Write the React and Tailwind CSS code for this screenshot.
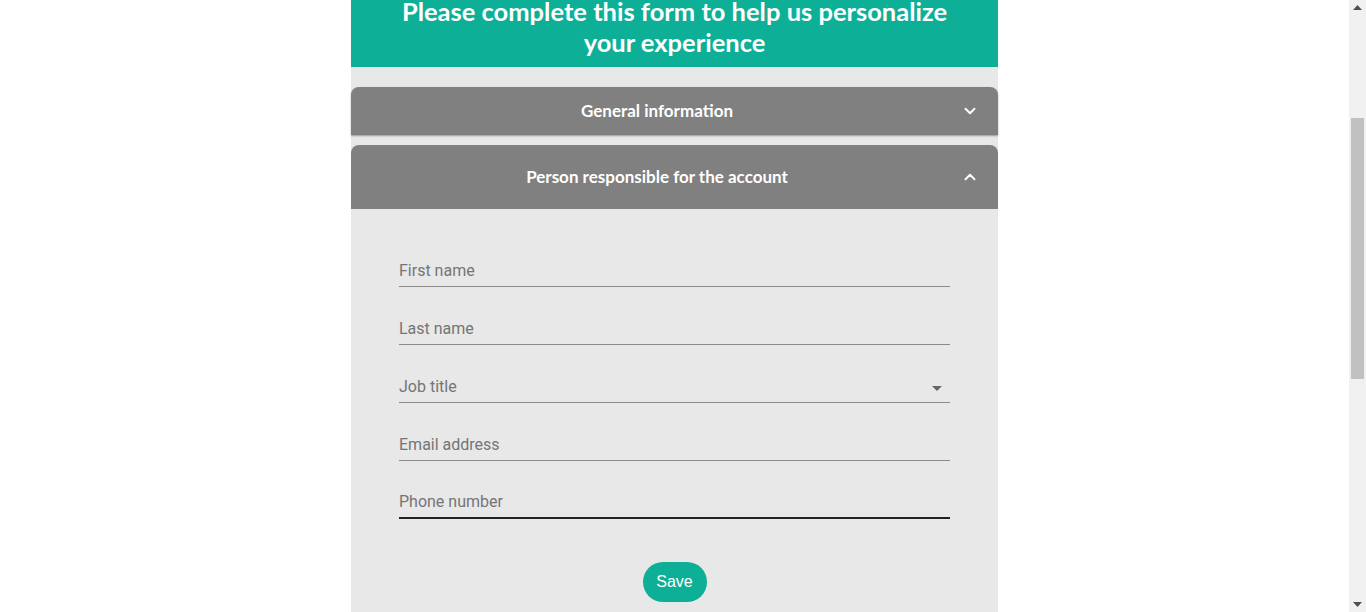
import { ChevronDown, ChevronUp } from 'lucide-react'

const fields = ['First name', 'Last name', 'Job title', 'Email address', 'Phone number']

function Field({ label }) {
  const select = label === 'Job title'
  const focused = label === 'Phone number'
  return (
    <div
      className={`h-[33px] flex items-end justify-between pb-[6px] ${
        focused ? 'border-b-2 border-[#222]' : 'border-b border-[#8a8a8a]'
      }`}
    >
      <span className="text-[16px] leading-[19px] text-[#757575] font-['Roboto',sans-serif]">{label}</span>
      {select && (
        <svg className="w-[24px] h-[24px] text-[#666] mb-[-4px] mr-[1px]" viewBox="0 0 24 24" fill="currentColor">
          <path d="M7 10l5 5 5-5z" />
        </svg>
      )}
    </div>
  )
}

function App() {
  return (
    <div className="h-[612px] overflow-hidden flex bg-white font-['Lato',sans-serif]">
      <div className="flex-1 flex justify-center">
        <div className="w-[647px] bg-[#e8e8e8]">
          {/* Header */}
          <div className="bg-[#0eaf97] mt-[-4px] pb-[9px] px-4 text-center">
            <h1 className="text-white text-[25.5px] leading-[31px] font-bold">
              Please complete this form to help us personalize
              <br />
              your experience
            </h1>
          </div>

          {/* General information */}
          <div className="mt-[20px] h-[48px] bg-[#808080] rounded-t-[8px] shadow-[0_1px_2px_rgba(0,0,0,0.35)] flex items-center pl-4 pr-[5px]">
            <span className="flex-1 text-center text-white text-[17px] font-bold">General information</span>
            <div className="w-[46px] flex justify-center">
              <ChevronDown className="w-[18px] h-[18px] text-white" strokeWidth={2.5} />
            </div>
          </div>

          {/* Person responsible */}
          <div className="mt-[10px] h-[64px] bg-[#808080] rounded-t-[8px] flex items-center pl-4 pr-[5px]">
            <span className="flex-1 text-center text-white text-[17px] font-bold">Person responsible for the account</span>
            <div className="w-[46px] flex justify-center">
              <ChevronUp className="w-[18px] h-[18px] text-white" strokeWidth={2.5} />
            </div>
          </div>

          <div className="px-[48px] pt-[45px] flex flex-col gap-[25px]">
            {fields.map((f) => (
              <Field key={f} label={f} />
            ))}
          </div>

          <div className="flex justify-center mt-[43px]">
            <button className="w-[64px] h-[40px] rounded-full bg-[#0eaf97] text-white text-[16px] font-['Liberation_Sans',Arial,sans-serif]">
              Save
            </button>
          </div>
        </div>
      </div>

      {/* Scrollbar */}
      <div className="w-[17px] bg-[#f1f1f1] flex flex-col items-center relative">
        <svg className="w-[9px] h-[5px] mt-[5px]" viewBox="0 0 9 5">
          <path d="M0 5L4.5 0L9 5z" fill="#505050" />
        </svg>
        <div className="w-[13px] h-[261px] mt-[108px] bg-[#c1c1c1]" />
        <svg className="w-[9px] h-[5px] absolute bottom-[5px]" viewBox="0 0 9 5">
          <path d="M0 0L4.5 5L9 0z" fill="#505050" />
        </svg>
      </div>
    </div>
  )
}

export default App
